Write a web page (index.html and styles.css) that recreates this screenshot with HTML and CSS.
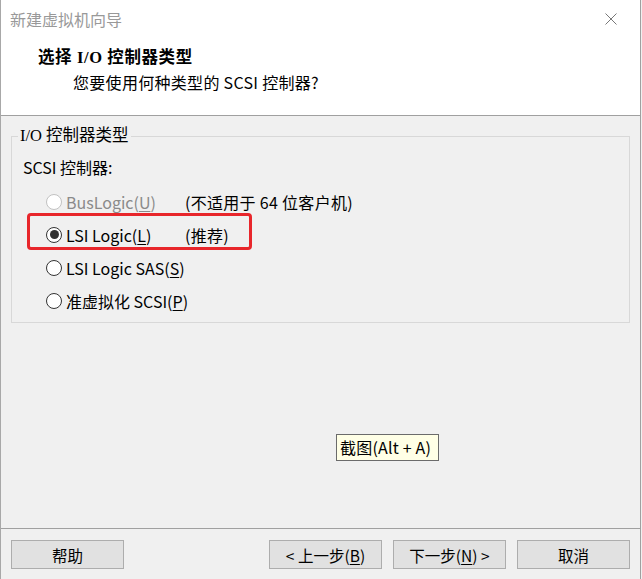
FILE: index.html
```html
<!DOCTYPE html>
<html lang="zh-CN">
<head>
<meta charset="utf-8">
<link rel="stylesheet" href="styles.css">
</head>
<body>
<div class="window">
  <div class="header">
    <div class="titlebar">
      <span class="title">新建虚拟机向导</span>
      <svg class="close" width="12" height="12" viewBox="0 0 12 12"><path d="M0.5 0.5L11.5 11.5M11.5 0.5L0.5 11.5" stroke="#777" stroke-width="1" fill="none"/></svg>
    </div>
    <div class="heading">选择 I/O 控制器类型</div>
    <div class="subheading">您要使用何种类型的 SCSI 控制器?</div>
  </div>
  <div class="main">
    <fieldset class="group">
      <legend class="legend">I/O 控制器类型</legend>
      <div class="label">SCSI 控制器:</div>
      <div class="options">
        <div class="row disabled"><span class="radio"></span><span class="opt">BusLogic(<u>U</u>)</span><span class="note">(不适用于 64 位客户机)</span></div>
        <div class="row"><span class="radio checked"></span><span class="opt">LSI Logic(<u>L</u>)</span><span class="note">(推荐)</span></div>
        <div class="row"><span class="radio"></span><span class="opt">LSI Logic SAS(<u>S</u>)</span></div>
        <div class="row"><span class="radio"></span><span class="opt">准虚拟化 SCSI(<u>P</u>)</span></div>
      </div>
    </fieldset>
    <div class="redbox"></div>
    <div class="tooltip">截图(Alt + A)</div>
  </div>
  <div class="footer">
    <button class="btn">帮助</button>
    <div class="spacer"></div>
    <button class="btn">&lt; 上一步(<u>B</u>)</button>
    <button class="btn">下一步(<u>N</u>) &gt;</button>
    <button class="btn">取消</button>
  </div>
</div>
</body>
</html>
```
FILE: styles.css
```css
* { box-sizing: border-box; }
html, body { margin: 0; padding: 0; background: #f0f0f0; }
body {
  width: 642px; height: 579px; overflow: hidden;
  font-family: "Noto Sans CJK SC", "Noto Sans", sans-serif;
  font-size: 16px; color: #000;
}
.window {
  width: 641px; height: 579px;
  border-left: 1px solid #a8a8a8;
  border-right: 1px solid #a0a0a0;
  display: flex; flex-direction: column;
  background: #f0f0f0;
}
.header {
  height: 116px; background: #fff;
  border-bottom: 1px solid #a0a0a0;
  flex: none;
}
.titlebar {
  height: 38px; display: flex; align-items: center;
  justify-content: space-between;
  padding: 0 23px 0 9px;
}
.title { color: #999; font-size: 16px; }
.close { display: block; }
.heading {
  margin: 9px 0 0 37px;
  font-family: "Liberation Serif", "Noto Sans CJK SC", serif;
  font-weight: bold; font-size: 16.5px; line-height: 22px;
  letter-spacing: 0.6px;
}
.subheading {
  margin: 2px 0 0 72px;
  font-size: 16px; line-height: 22px; letter-spacing: 0.3px;
}
.main {
  flex: 1; position: relative;
  padding: 10px 0 0 10px;
}
.group {
  margin: 0; width: 619px; height: 197px;
  border: 1px solid #d8d8d8;
  padding: 0 0 0 11px;
}
.legend {
  padding: 0 2px; margin-left: -5px;
  font-family: "Liberation Serif", "Noto Sans CJK SC", serif;
  font-size: 16.5px; line-height: 20px;
}
.label { margin-top: 10px; line-height: 22px; font-size: 16px; }
.options { margin-top: 7px; display: flex; flex-direction: column; }
.row {
  height: 33px; display: flex; align-items: center;
  font-size: 16px;
}
.radio {
  width: 16px; height: 16px; border-radius: 50%;
  border: 1px solid #333; background: #fff;
  margin-left: 23px; margin-right: 4px;
  display: flex; align-items: center; justify-content: center;
  flex: none;
}
.radio.checked::after {
  content: ""; width: 9px; height: 9px; border-radius: 50%; background: #333;
}
.disabled .radio { border-color: #c2c2c2; }
.disabled .opt { color: #8a8a8a; }
.opt { width: 119px; white-space: nowrap; }
.note { white-space: nowrap; letter-spacing: 0.3px; }
u { text-decoration: underline; text-underline-offset: 2px; }
.redbox {
  position: absolute; left: 26px; top: 97px;
  width: 225px; height: 37px;
  border: 3px solid #e8262b; border-radius: 4px;
}
.tooltip {
  position: absolute; left: 335px; top: 318px;
  width: 103px; height: 27px;
  border: 1px solid #6b6b6b; background: #ffffe6;
  font-size: 16px; line-height: 25px; padding-left: 3px;
  white-space: nowrap; letter-spacing: 0.2px;
}
.footer {
  height: 51px; flex: none;
  border-top: 1px solid #a0a0a0;
  display: flex; align-items: flex-start;
  padding: 11px 10px 0 10px;
  gap: 11px;
}
.spacer { flex: 1; }
.btn {
  width: 113px; height: 29px; margin: 0;
  border: 1px solid #adadad; background: #e1e1e1;
  font-family: "Noto Sans CJK SC", "Noto Sans", sans-serif;
  font-size: 15.5px; color: #000; padding: 0;
}
```
